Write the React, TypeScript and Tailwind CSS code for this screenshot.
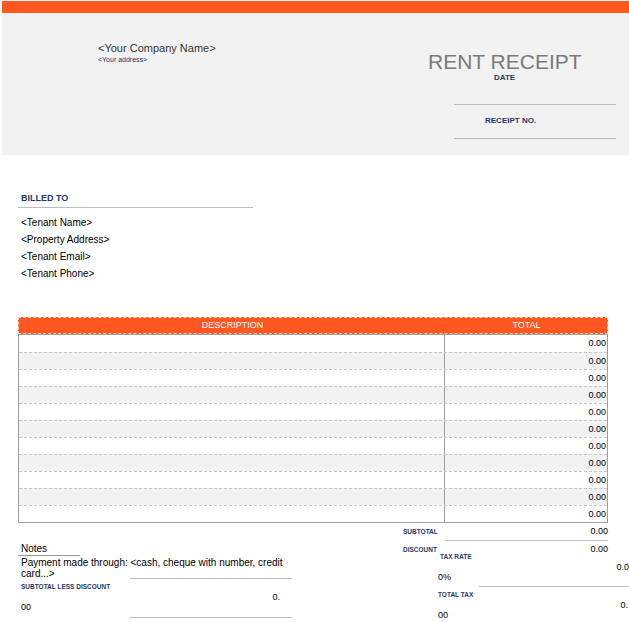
export default function App() {
  const rows = Array.from({ length: 11 });
  const f = { fontFamily: '"Liberation Sans", Arial, sans-serif' };
  return (
    <div className="w-[629px] h-[622px] bg-white overflow-hidden text-black" style={f}>
      <div className="ml-[2px] h-[12px] mt-[1px] bg-[#ff5722]" />
      <div className="ml-[2px] h-[142px] bg-[#f2f2f2] flex">
        <div className="w-[426px] pl-[96px] pt-[29px]">
          <div className="text-[11px] leading-[13px] text-[#333]">&lt;Your Company Name&gt;</div>
          <div className="text-[7px] leading-[9px] text-[#1f3864]">&lt;Your address&gt;</div>
        </div>
        <div className="flex-1 pt-[38px]">
          <div className="text-[21px] leading-[22px] text-[#7a7a7a]">RENT RECEIPT</div>
          <div className="text-[8px] font-bold leading-[9px] text-[#1f3864] pl-[66px]">DATE</div>
          <div className="ml-[26px] w-[162px] mt-[22px] border-t border-[#bdbdbd]" />
          <div className="text-[8px] font-bold text-[#1f3864] pl-[57px] pt-[11px] leading-[9px]">RECEIPT NO.</div>
          <div className="ml-[26px] w-[162px] mt-[13px] border-t border-[#bdbdbd]" />
        </div>
      </div>
      <div className="ml-[21px] mt-[38px] w-[232px]">
        <div className="text-[9px] font-bold text-[#1f3864] leading-[10px]">BILLED TO</div>
        <div className="-ml-[3px] mt-[4px] border-t border-[#bdbdbd]" />
        <div className="mt-[6px] text-[10px] leading-[17px]">
          <div>&lt;Tenant Name&gt;</div>
          <div>&lt;Property Address&gt;</div>
          <div>&lt;Tenant Email&gt;</div>
          <div>&lt;Tenant Phone&gt;</div>
        </div>
      </div>
      <div className="ml-[18px] mt-[35px] w-[590px]">
        <div className="flex h-[17px] bg-[#ff5722] border border-dashed border-[#ffd0c0] text-white text-[9px] items-center">
          <div className="w-[427px] text-center">DESCRIPTION</div>
          <div className="flex-1 text-center">TOTAL</div>
        </div>
        <div className="border border-[#9e9e9e]">
          {rows.map((_, i) => (
            <div key={i} className={`flex h-[17px] ${i ? "border-t border-dashed border-[#c8c8c8]" : ""} ${i % 2 ? "bg-[#f2f2f2]" : "bg-white"}`}>
              <div className="w-[426px] border-r border-[#9e9e9e]" />
              <div className="flex-1 text-right pr-[1px] text-[9px] leading-[16px]">0.00</div>
            </div>
          ))}
        </div>
        <div className="flex">
          <div className="w-[275px] pt-[20px]">
            <div className="pl-[3px] text-[10px] leading-[12px]">Notes</div>
            <div className="w-[62px] border-t border-[#999]" />
            <div className="pl-[3px] text-[10px] leading-[11px] mt-[1px]">Payment made through: &lt;cash, cheque with number, credit card...&gt;</div>
          </div>
          <div className="flex-1 pl-[110px]">
            <div className="flex h-[17px] items-center">
              <div className="w-[42px] text-[6.5px] font-bold text-[#1f3864]">SUBTOTAL</div>
              <div className="flex-1 text-right text-[9px]">0.00</div>
            </div>
            <div className="ml-[42px] border-t border-[#bdbdbd]" />
            <div className="flex h-[17px] items-center">
              <div className="w-[42px] text-[6.5px] font-bold text-[#1f3864]">DISCOUNT</div>
              <div className="flex-1 text-right text-[9px]">0.00</div>
            </div>
          </div>
        </div>
      </div>
      <div className="flex -mt-[27px]">
        <div className="w-[292px] pl-[21px] pt-[26px]">
          <div className="ml-[109px] border-t border-[#bdbdbd]" />
          <div className="text-[6.5px] font-bold text-[#1f3864] mt-[3px]">SUBTOTAL LESS DISCOUNT</div>
          <div className="text-right text-[9px] pr-[12px] leading-[10px]">0.</div>
          <div className="text-[9px] leading-[10px]">00</div>
          <div className="ml-[109px] mt-[5px] border-t border-[#bdbdbd]" />
        </div>
        <div className="flex-1 pl-[146px]">
          <div className="text-[6.5px] font-bold text-[#1f3864] pl-[2px]">TAX RATE</div>
          <div className="text-right text-[9px] leading-[10px]">0.0</div>
          <div className="text-[9px] leading-[10px]">0%</div>
          <div className="ml-[41px] mt-[4px] border-t border-[#bdbdbd]" />
          <div className="text-[6.5px] font-bold text-[#1f3864] mt-[3px]">TOTAL TAX</div>
          <div className="text-right text-[9px] leading-[10px] pr-[1px]">0.</div>
          <div className="text-[9px] leading-[10px]">00</div>
        </div>
      </div>
    </div>
  );
}
